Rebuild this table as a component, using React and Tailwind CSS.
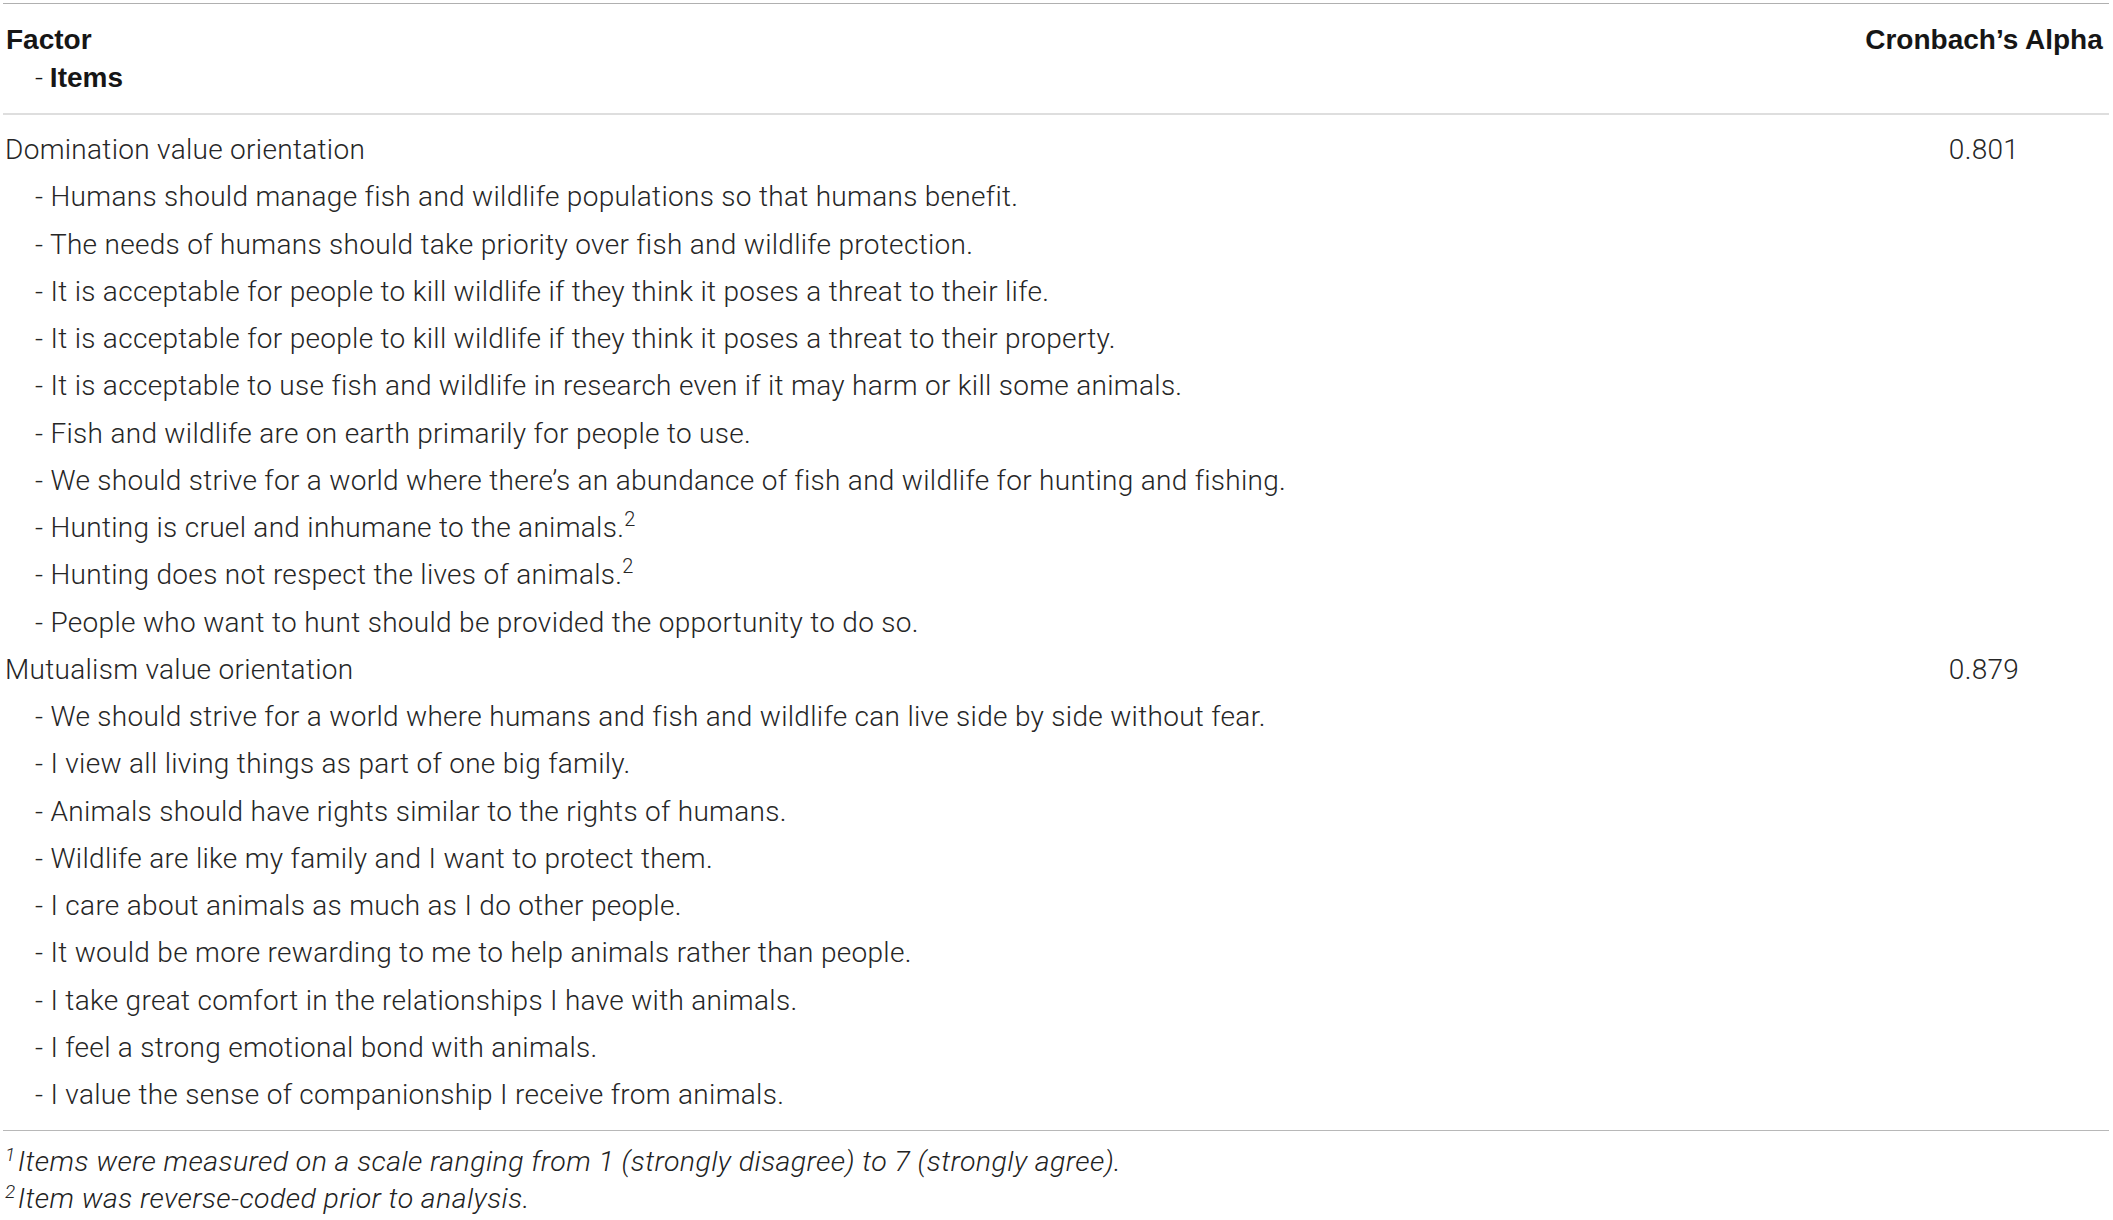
import React from "react";

const domination = [
  ["Humans should manage fish and wildlife populations so that humans benefit."],
  ["The needs of humans should take priority over fish and wildlife protection."],
  ["It is acceptable for people to kill wildlife if they think it poses a threat to their life."],
  ["It is acceptable for people to kill wildlife if they think it poses a threat to their property."],
  ["It is acceptable to use fish and wildlife in research even if it may harm or kill some animals."],
  ["Fish and wildlife are on earth primarily for people to use."],
  ["We should strive for a world where there\u2019s an abundance of fish and wildlife for hunting and fishing."],
  ["Hunting is cruel and inhumane to the animals.", "2"],
  ["Hunting does not respect the lives of animals.", "2"],
  ["People who want to hunt should be provided the opportunity to do so."],
];

const mutualism = [
  ["We should strive for a world where humans and fish and wildlife can live side by side without fear."],
  ["I view all living things as part of one big family."],
  ["Animals should have rights similar to the rights of humans."],
  ["Wildlife are like my family and I want to protect them."],
  ["I care about animals as much as I do other people."],
  ["It would be more rewarding to me to help animals rather than people."],
  ["I take great comfort in the relationships I have with animals."],
  ["I feel a strong emotional bond with animals."],
  ["I value the sense of companionship I receive from animals."],
];

function FactorRow({ label, value }) {
  return (
    <div className="flex h-[47.25px] leading-[47.25px]">
      <div className="flex-1 pl-[2px]">{label}</div>
      <div className="w-[250px] text-center">{value}</div>
    </div>
  );
}

function ItemRow({ text, sup }) {
  return (
    <div className="flex h-[47.25px] leading-[47.25px]">
      <div className="flex-1 pl-[32px]">
        - {text}
        {sup && (
          <span className="relative -top-[11px] text-[20px] leading-none">{sup}</span>
        )}
      </div>
      <div className="w-[250px]"></div>
    </div>
  );
}

export default function App() {
  return (
    <div className="bg-white min-h-[1220px] w-[2113px] pl-[3px] pr-[4px] pt-[3px] font-['Roboto','Liberation_Sans',sans-serif] text-[28px] font-light tracking-[0.3px] text-[#262626]">
      <div className="border-t border-[#b0b0b0]">
        <div className="flex pt-[17px] pb-[16px] font-['Liberation_Sans',sans-serif] font-bold tracking-normal text-[#161616] leading-[38px]">
          <div className="flex-1 pl-[3px]">
            <div>Factor</div>
            <div className="pl-[29px]">
              <span className="font-['Roboto',sans-serif] font-light">- </span>Items
            </div>
          </div>
          <div className="w-[250px] text-center">Cronbach&rsquo;s Alpha</div>
        </div>
        <div className="border-t-2 border-[#dedede] pt-[11px] pb-[12px]">
          <FactorRow label="Domination value orientation" value="0.801" />
          {domination.map(([t, s], i) => (
            <ItemRow key={"d" + i} text={t} sup={s} />
          ))}
          <FactorRow label="Mutualism value orientation" value="0.879" />
          {mutualism.map(([t, s], i) => (
            <ItemRow key={"m" + i} text={t} sup={s} />
          ))}
        </div>
        <div className="border-t border-[#b8b8b8] pt-[12px] text-[28.5px] italic leading-[37px] tracking-[0.42px] text-[#222]">
          <div className="pl-[2px]">
            <span className="relative -top-[10px] text-[19px] leading-none mr-[2px]">1</span>
            Items were measured on a scale ranging from 1 (strongly disagree) to 7 (strongly agree).
          </div>
          <div className="pl-[2px]">
            <span className="relative -top-[10px] text-[19px] leading-none mr-[2px]">2</span>
            Item was reverse-coded prior to analysis.
          </div>
        </div>
      </div>
    </div>
  );
}
